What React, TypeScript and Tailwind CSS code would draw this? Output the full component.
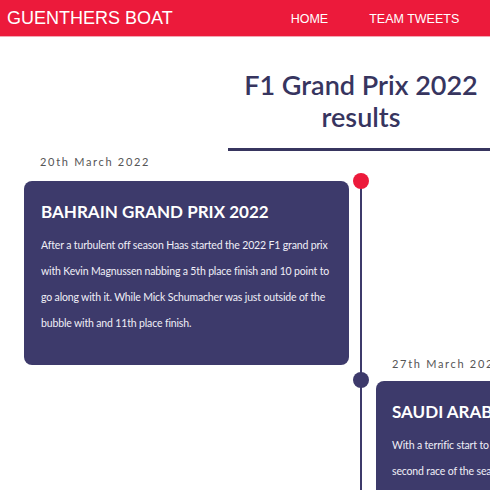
const entries = [
  {
    date: "20th March 2022",
    title: "BAHRAIN GRAND PRIX 2022",
    text: "After a turbulent off season Haas started the 2022 F1 grand prix with Kevin Magnussen nabbing a 5th place finish and 10 point to go along with it. While Mick Schumacher was just outside of the bubble with and 11th place finish.",
  },
  {
    date: "27th March 2022",
    title: "SAUDI ARABIAN GRAND PRIX 2022",
    text: "With a terrific start to the season Haas headed to Jeddah for the second race of the season with high hopes and a lot to prove.",
  },
]

const Header = () => (
  <header className="flex h-[37px] items-center bg-[#ec1a3b] border-b border-[#f3a7b3] font-['Liberation_Sans',Arial,sans-serif] text-white">
    <h1 className="pl-[7px] text-[18px] leading-none">GUENTHERS BOAT</h1>
    <nav className="ml-[118px] flex gap-[41px] text-[12.5px] pt-[2px]">
      <a>HOME</a>
      <a>TEAM TWEETS</a>
    </nav>
  </header>
)

export default function App() {
  return (
    <div className="w-[490px] h-[490px] overflow-hidden bg-white font-['Lato',sans-serif]">
      <Header />

      <div className="ml-[228px] w-[300px] pt-[32px]">
        <h2 className="w-[266px] text-center text-[27px] leading-[32px] font-semibold text-[#37355f]">
          F1 Grand Prix 2022
          <br />
          results
        </h2>
        <div className="mt-[15px] h-[3px] bg-[#37355f]" />
      </div>

      <div className="relative mt-[4px]">
        <div className="absolute left-[360px] top-[28px] w-[2px] h-[400px] bg-[#3d3a6b]" />

        <div className="flex flex-col">
          <div className="w-[349px] pl-[24px]">
            <p className="pl-[16px] text-[11px] tracking-[1.7px] text-[#555] leading-[14px]">{entries[0].date}</p>
            <div className="mt-[12px] rounded-[8px] bg-[#3d3a6b] pl-[17px] pr-[12px] pt-[20px] pb-[29px] text-white">
              <h3 className="text-[17px] font-bold leading-[22px]">{entries[0].title}</h3>
              <p className="mt-[9px] text-[10.5px] tracking-[-0.15px] leading-[26px] text-[#f0eff7]">{entries[0].text}</p>
            </div>
          </div>

          <div className="ml-[376px] -mt-[8px] w-[325px]">
            <p className="pl-[16px] text-[11px] tracking-[1.7px] text-[#555] leading-[14px] whitespace-nowrap">{entries[1].date}</p>
            <div className="mt-[10px] rounded-[8px] bg-[#3d3a6b] pl-[16px] pr-[12px] pt-[20px] pb-[28px] text-white">
              <h3 className="text-[17px] font-bold leading-[22px] whitespace-nowrap">{entries[1].title}</h3>
              <p className="mt-[9px] text-[10.5px] tracking-[-0.15px] leading-[26px] text-[#f0eff7]">{entries[1].text}</p>
            </div>
          </div>
        </div>

        <div className="absolute left-[353px] top-[18px] w-[16px] h-[16px] rounded-full bg-[#ec1a3b]" />
        <div className="absolute left-[353px] top-[217px] w-[16px] h-[16px] rounded-full bg-[#3d3a6b]" />
      </div>
    </div>
  )
}
